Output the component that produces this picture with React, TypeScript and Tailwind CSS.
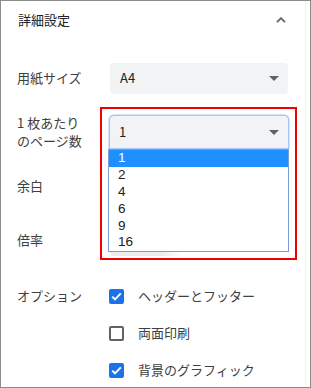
import React from "react";

const font = { fontFamily: '"Noto Sans CJK JP", "Noto Sans", sans-serif' };

function Arrow() {
  return (
    <svg width="10" height="5" viewBox="0 0 10 5" className="shrink-0">
      <path d="M0 0 L10 0 L5 5 Z" fill="#5f6368" />
    </svg>
  );
}

function Check({ checked }: { checked: boolean }) {
  if (checked)
    return (
      <div className="w-[15px] h-[15px] rounded-[2px] bg-[#1a73e8] flex items-center justify-center shrink-0">
        <svg width="11" height="9" viewBox="0 0 11 9">
          <path d="M1.2 4.6 L4 7.3 L9.8 1.3" stroke="white" strokeWidth="1.9" fill="none" />
        </svg>
      </div>
    );
  return <div className="w-[15px] h-[15px] rounded-[2px] border-2 border-[#5f6368] shrink-0" />;
}

export default function App() {
  const items = ["1", "2", "4", "6", "9", "16"];
  return (
    <div
      className="w-[311px] h-[388px] relative overflow-hidden bg-white border border-[#8c8c8c] text-[#3c4043]"
      style={font}
    >
      <div className="absolute top-0 bottom-0 right-[4px] w-px bg-[#f2f2f2]" />
      {/* header */}
      <div className="h-[37px] flex items-center justify-between pl-[17px] pr-[24px]">
        <span className="text-[13px] text-[#202124]">詳細設定</span>
        <svg width="10" height="6" viewBox="0 0 10 6" className="mt-[1px]">
          <path d="M1 5.2 L5 1.2 L9 5.2" stroke="#5f6368" strokeWidth="1.8" fill="none" />
        </svg>
      </div>

      <div className="mt-[24px] flex flex-col gap-[22px] pl-[16px]">
        {/* paper size */}
        <div className="flex items-center h-[32px]">
          <div className="w-[93px] text-[13px]">用紙サイズ</div>
          <div className="w-[178px] h-[31px] rounded-[4px] bg-[#f1f3f4] flex items-center justify-between pl-[10px] pr-[9px]">
            <span className="text-[13px] text-[#202124]">A4</span>
            <Arrow />
          </div>
        </div>

        {/* pages per sheet */}
        <div className="flex items-center h-[32px]">
          <div className="w-[93px] text-[13px] leading-[18px]">
            1 枚あたり
            <br />
            のページ数
          </div>
          <div className="relative w-[178px] h-[32px]">
            <div className="w-full h-full rounded-t-[4px] bg-[#f1f3f4] shadow-[0_0_0_1.5px_#a9c6f6] flex items-center justify-between pl-[9px] pr-[9px]">
              <span className="text-[13px] text-[#202124]">1</span>
              <Arrow />
            </div>
            <div className="absolute left-[-2px] top-[33px] w-[181px] bg-white border border-[#7d9dd6] z-10 text-[13.5px] leading-[14px] text-[#202124] font-['Liberation_Sans',sans-serif]">
              {items.map((it, i) => (
                <div
                  key={it}
                  className={
                    "h-[16.8px] flex items-center pl-[9px] " +
                    (i === 0 ? "bg-[#1e8fff] text-white" : "")
                  }
                >
                  {it}
                </div>
              ))}
            </div>
          </div>
        </div>

        {/* margins */}
        <div className="flex items-center h-[32px]">
          <div className="w-[93px] text-[13px]">余白</div>
          <div className="w-[178px] h-[31px] rounded-[4px] bg-[#f1f3f4]" />
        </div>

        {/* scale */}
        <div className="flex items-center h-[32px]">
          <div className="w-[93px] text-[13px]">倍率</div>
          <div className="w-[178px] h-[32px] rounded-[4px] bg-[linear-gradient(to_right,#ececec_52px,#ffffff_72px)]" />
        </div>
      </div>

      {/* options */}
      <div className="mt-[28px] pl-[16px] flex">
        <div className="w-[92px] h-[24px] flex items-center text-[13px]">オプション</div>
        <div className="flex flex-col gap-[13px]">
          <div className="h-[24px] flex items-center gap-[14px] text-[13px]">
            <Check checked />
            <span>ヘッダーとフッター</span>
          </div>
          <div className="h-[24px] flex items-center gap-[14px] text-[13px]">
            <Check checked={false} />
            <span>両面印刷</span>
          </div>
          <div className="h-[24px] flex items-center gap-[14px] text-[13px]">
            <Check checked />
            <span>背景のグラフィック</span>
          </div>
        </div>
      </div>

      {/* annotation */}
      <div className="absolute left-[99px] top-[106px] w-[197px] h-[153px] border-[2.5px] border-[#f00000] z-20" />
    </div>
  );
}
